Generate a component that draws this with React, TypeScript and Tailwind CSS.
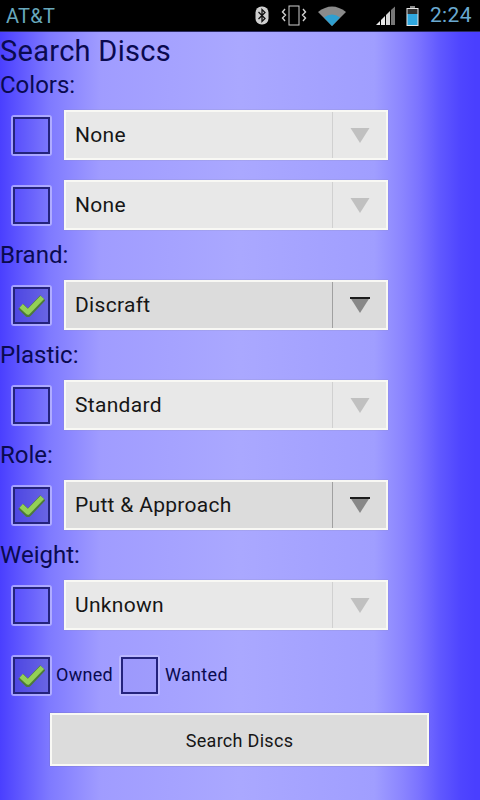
const roboto = { fontFamily: "Roboto, sans-serif" };

function Check() {
  return (
    <svg viewBox="0 0 30 26" className="w-[27px] h-[24px]">
      <path d="M3 14.5 L11 22.5 L27.5 5" fill="none" stroke="#4d7a3a" strokeWidth="8" strokeLinejoin="round" />
      <path d="M3.5 14 L11 21 L27 4.5" fill="none" stroke="#93d056" strokeWidth="5.5" strokeLinejoin="round" />
    </svg>
  );
}

function Box({ on }: { on?: boolean }) {
  return (
    <div className="w-[41px] h-[41px] shrink-0 rounded-[3px] border-2 border-[#c4c2ff]/70 flex">
      <div className={`flex-1 border-2 border-[#24237c] flex items-center justify-center ${on ? "bg-[#2a2a90]/25" : "bg-[#4a45c0]/5"}`}>
        {on && <Check />}
      </div>
    </div>
  );
}

function Select({ value, on }: { value: string; on?: boolean }) {
  return (
    <div className={`w-[324px] h-[50px] border-2 border-[#f8f8f4] flex items-center shadow-[0_0_1px_#8888aa] ${on ? "bg-[#dcdcdc]" : "bg-[#e8e8e8]"}`}>
      <span className="flex-1 pl-[9px] pt-[2px] text-[21px] tracking-[0.3px] text-[#161616]">{value}</span>
      <div className={`w-[1px] h-full ${on ? "bg-[#a0a0a0]" : "bg-[#d0d0d0]"}`} />
      <div className="w-[53px] flex items-center justify-center">
        <svg width="20" height="17" viewBox="0 0 20 17">
          <path d="M0.5 1 H19.5 L10 16 Z" fill={on ? "#888888" : "#c0c0c0"} />
          {on && <rect x="0" y="0" width="20" height="2" fill="#1c1c1c" />}
        </svg>
      </div>
    </div>
  );
}

function Row({ value, on }: { value: string; on?: boolean }) {
  return (
    <div className="h-[70px] flex items-center pl-[11px] gap-[12px]">
      <Box on={on} />
      <Select value={value} on={on} />
    </div>
  );
}

function Label({ children }: { children: string }) {
  return <div className="h-[30px] leading-[30px] text-[24px] text-[#0a0a50]">{children}</div>;
}

function StatusIcons() {
  return (
    <div className="flex items-center">
      <svg width="14" height="19" viewBox="0 0 14 19" className="mr-[12px]">
        <rect x="0.5" y="0.5" width="13" height="18" rx="6" fill="#cfcfcf" />
        <path d="M3.5 6 L10 12.5 L7 15.5 V3.5 L10 6.5 L3.5 13" fill="none" stroke="#111" strokeWidth="1.3" />
      </svg>
      <svg width="26" height="22" viewBox="0 0 26 22" className="mr-[11px]">
        <rect x="8" y="1" width="10" height="19" fill="none" stroke="#cfcfcf" strokeWidth="1" />
        <path d="M4 4 L1.5 7 L4.5 10 L1.5 13 L4 16 M22 4 L24.5 7 L21.5 10 L24.5 13 L22 16" fill="none" stroke="#cfcfcf" strokeWidth="1.4" />
      </svg>
      <svg width="28" height="20" viewBox="0 0 28 20" className="mr-[29px]">
        <path d="M0 6 Q14 -5 28 6 L14 20 Z" fill="#8a8a8a" />
        <path d="M6 11.5 Q14 5.5 22 11.5 L14 20 Z" fill="#2f9fd0" />
      </svg>
      <svg width="22" height="20" viewBox="0 0 22 20" className="mr-[9px]">
        <path d="M1 19 L5 15 V19 Z M6 14 L10 10 V19 H6 Z" fill="#e8e8e8" />
        <path d="M11 9 L15 5 V19 H11 Z" fill="#d8d8d8" />
        <path d="M16 4 L20 0.5 V19 H16 Z" fill="#777777" />
      </svg>
      <svg width="13" height="20" viewBox="0 0 13 20" className="mr-[11px]">
        <rect x="4" y="0" width="5" height="2" fill="#8a8a8a" />
        <rect x="0.5" y="2" width="12" height="18" fill="#e6e6e6" />
        <rect x="1.5" y="3" width="10" height="5" fill="#333" />
        <rect x="1.5" y="8" width="10" height="11" fill="#2fa8e0" />
      </svg>
      <span className="text-[21px] tracking-[0.4px] text-[#6aa9d0] mr-[8px]">2:24</span>
    </div>
  );
}

export default function App() {
  return (
    <div
      style={roboto}
      className="w-[480px] h-[800px] overflow-hidden flex flex-col bg-[linear-gradient(90deg,#4a3fff_0%,#7f7aff_10.4%,#a09cff_21%,#aaa8ff_50%,#a09eff_78%,#8a84ff_84%,#7a72ff_87.5%,#6058ff_91.7%,#4f45ff_96%,#4a3fff_99%)]"
    >
      <div className="h-[32px] shrink-0 bg-black flex items-center justify-between pl-[6px] border-b border-[#2a2a60]">
        <span className="text-[20px] tracking-[0.3px] text-[#68a8bc]">AT&amp;T</span>
        <StatusIcons />
      </div>
      <div className="h-[38px] leading-[38px] text-[29px] tracking-[0.3px] text-[#0a0a50]">Search Discs</div>
      <Label>Colors:</Label>
      <Row value="None" />
      <Row value="None" />
      <Label>Brand:</Label>
      <Row value="Discraft" on />
      <Label>Plastic:</Label>
      <Row value="Standard" />
      <Label>Role:</Label>
      <Row value="Putt & Approach" on />
      <Label>Weight:</Label>
      <Row value="Unknown" />
      <div className="h-[70px] flex items-center pl-[11px] text-[18px] tracking-[0.3px] text-[#0a0a50]">
        <Box on />
        <span className="ml-[4px] mr-[6px] mb-[2px]">Owned</span>
        <Box />
        <span className="ml-[5px] mb-[2px]">Wanted</span>
      </div>
      <div className="flex justify-center pr-[1px] pt-[3px]">
        <button className="w-[379px] h-[53px] pt-[2px] bg-[#dcdcdc] border-2 border-[#f8f8f4] shadow-[0_0_1px_#666688] text-[18px] tracking-[0.3px] text-[#161616]">
          Search Discs
        </button>
      </div>
    </div>
  );
}
